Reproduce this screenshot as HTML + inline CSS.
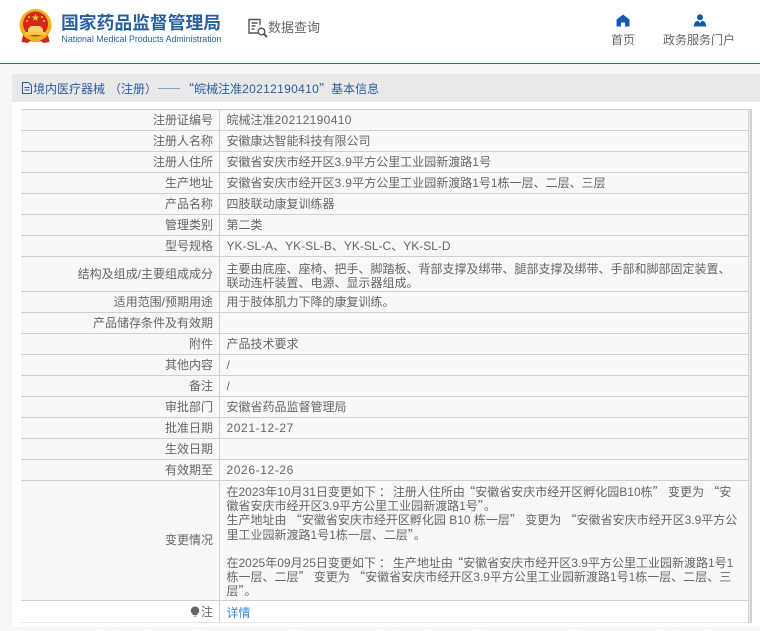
<!DOCTYPE html>
<html lang="zh-CN">
<head>
<meta charset="utf-8">
<title>国家药品监督管理局</title>
<style>
html,body{margin:0;padding:0;background:#fff;}
body{width:760px;height:631px;position:relative;overflow:hidden;font-family:"Liberation Sans","Noto Sans CJK SC",sans-serif;color:#666;font-size:12px;}
.a{position:absolute;white-space:nowrap;}
.q{font-family:"Noto Sans CJK SC",sans-serif;}
.c{margin-left:3px;margin-right:2px;}
.m{margin-left:-5px;}
.d{letter-spacing:.35px;}
.t{letter-spacing:.6px;}
#dots{position:absolute;left:0;top:64px;width:760px;height:567px;background:repeating-linear-gradient(45deg,#f2f2f2 0 1px,#fbfbfb 1px 2px);}
#panel{position:absolute;left:12px;top:74px;width:748px;height:553px;background:#fff;}
#hd{position:absolute;left:12px;top:74px;width:748px;height:28px;background:#e9e9e9;}
.r{position:absolute;left:21px;width:727px;border-top:1px solid #d0d0d0;box-sizing:border-box;background:#f8f8f9;}
.r .k{position:absolute;left:0;top:0;width:192px;text-align:right;line-height:21px;height:100%;background:#f7f7f7;white-space:nowrap;}
.r .s{position:absolute;left:198px;top:0;width:1px;height:100%;background:#d0d0d0;}
.r .v{position:absolute;left:205.500px;top:0;line-height:21px;white-space:nowrap;}
</style>
</head>
<body>
<svg class="a" style="left:18px;top:8px" width="36" height="38" viewBox="0 0 36 38">
<path d="M5 27l-1.500 7 6 1 3-2h10l3 2 6-1-1.500-7z" fill="#c8281e"/>
<circle cx="17.500" cy="17" r="16" fill="#efb21e"/>
<circle cx="17.500" cy="16" r="12.500" fill="#d8261c"/>
<path d="M17.500 6l1 2.600h2.700l-2.200 1.600.9 2.600-2.400-1.600-2.400 1.600.9-2.600-2.200-1.600h2.700z" fill="#f8d030"/>
<circle cx="11" cy="9" r="1" fill="#f8d030"/><circle cx="24" cy="9" r="1" fill="#f8d030"/><circle cx="9" cy="13" r="1" fill="#f8d030"/><circle cx="26" cy="13" r="1" fill="#f8d030"/>
<path d="M10 21l3-3h9l3 3v3H10z" fill="#f6d66a"/>
<rect x="7" y="24" width="21" height="3" fill="#f3c64a"/>
<rect x="13" y="31" width="9" height="3" fill="#efb21e"/>
</svg>
<div class="a" style="left:61px;top:10px;font-size:17.800px;line-height:24px;font-weight:700;color:#2a5f9e;font-family:'Noto Sans CJK SC',sans-serif;">国家药品监督管理局</div>
<div class="a" style="left:61.500px;top:33px;font-size:8.800px;line-height:13px;color:#2a5f9e;">National Medical Products Administration</div>

<svg class="a" style="left:247px;top:18px" width="22" height="21" viewBox="0 0 22 21" fill="none" stroke="#555" stroke-width="1.400">
<path d="M11 15H2V1.500h11V7"/><path d="M4.500 5h6M4.500 8h4M4.500 11h3"/><circle cx="14.500" cy="13.500" r="3.300"/><path d="M17 16l3 3" stroke-width="2"/>
</svg>
<div class="a" style="left:268px;top:17px;font-size:13px;line-height:20px;color:#666;font-family:'Noto Sans CJK SC',sans-serif;">数据查询</div>

<svg class="a" style="left:616px;top:14px" width="14" height="13" viewBox="0 0 14 13"><path d="M7 0.500L13.500 5.500V12.500H9V8.500H5V12.500H.5V5.500z" fill="#1558b0"/></svg>
<div class="a" style="left:611px;top:31px;font-size:12px;line-height:18px;">首页</div>
<svg class="a" style="left:693px;top:14px" width="14" height="13" viewBox="0 0 14 13"><circle cx="7" cy="3.200" r="3" fill="#1558b0"/><path d="M.5 12.500L2 8l3-1.500L7 9l2-2.500L12 8l1.500 4.500z" fill="#1558b0"/></svg>
<div class="a" style="left:663px;top:31px;font-size:12px;line-height:18px;">政务服务门户</div>

<div class="a" style="left:0;top:63px;width:760px;height:1px;background:#2e6fa3;"></div>
<div id="dots"></div>
<div id="panel"></div>
<div id="hd"></div>
<svg class="a" style="left:22px;top:82px" width="10" height="12" viewBox="0 0 10 12" fill="none" stroke="#2a5f9e"><path d="M.5.500h6l3 3v8h-9z"/><path d="M2.500 5.500h5M2.500 8h5"/></svg>
<div class="a" style="left:33px;top:80px;font-size:12px;line-height:17px;color:#2a5f9e;">境内医疗器械<span class="q" style="margin-left:4px">（</span>注册<span class="q">）</span><span class="q" style="letter-spacing:1px">——</span><span class="q">“</span>皖械注准<span class="d" style="letter-spacing:.33px">20212190410</span><span class="q">”</span>基本信息</div>

<div class="r" style="top:109px;height:21px"><div class="k">注册证编号</div><div class="s"></div><div class="v">皖械注准<span class="d">20212190410</span></div></div>
<div class="r" style="top:130px;height:21px"><div class="k">注册人名称</div><div class="s"></div><div class="v">安徽康达智能科技有限公司</div></div>
<div class="r" style="top:151px;height:21px"><div class="k">注册人住所</div><div class="s"></div><div class="v">安徽省安庆市经开区<span class="d">3.9</span>平方公里工业园新渡路<span class="d">1</span>号</div></div>
<div class="r" style="top:172px;height:21px"><div class="k">生产地址</div><div class="s"></div><div class="v">安徽省安庆市经开区<span class="d">3.9</span>平方公里工业园新渡路1号1栋一层、二层、三层</div></div>
<div class="r" style="top:193px;height:21px"><div class="k">产品名称</div><div class="s"></div><div class="v">四肢联动康复训练器</div></div>
<div class="r" style="top:214px;height:21px"><div class="k">管理类别</div><div class="s"></div><div class="v">第二类</div></div>
<div class="r" style="top:235px;height:21px"><div class="k">型号规格</div><div class="s"></div><div class="v">YK-SL-A、YK-SL-B、YK-SL-C、YK-SL-D</div></div>
<div class="r" style="top:256px;height:35px"><div class="k" style="line-height:35px">结构及组成/主要组成成分</div><div class="s"></div><div class="v" style="top:5px;line-height:14px">主要由底座、座椅、把手、脚踏板、背部支撑及绑带、腿部支撑及绑带、手部和脚部固定装置、<br>联动连杆装置、电源、显示器组成。</div></div>
<div class="r" style="top:291px;height:21px"><div class="k">适用范围/预期用途</div><div class="s"></div><div class="v">用于肢体肌力下降的康复训练。</div></div>
<div class="r" style="top:312px;height:21px"><div class="k">产品储存条件及有效期</div><div class="s"></div><div class="v"></div></div>
<div class="r" style="top:333px;height:21px"><div class="k">附件</div><div class="s"></div><div class="v">产品技术要求</div></div>
<div class="r" style="top:354px;height:21px"><div class="k">其他内容</div><div class="s"></div><div class="v">/</div></div>
<div class="r" style="top:375px;height:21px"><div class="k">备注</div><div class="s"></div><div class="v">/</div></div>
<div class="r" style="top:396px;height:21px"><div class="k">审批部门</div><div class="s"></div><div class="v">安徽省药品监督管理局</div></div>
<div class="r" style="top:417px;height:21px"><div class="k">批准日期</div><div class="s"></div><div class="v t">2021-12-27</div></div>
<div class="r" style="top:438px;height:21px"><div class="k">生效日期</div><div class="s"></div><div class="v"></div></div>
<div class="r" style="top:459px;height:21px"><div class="k">有效期至</div><div class="s"></div><div class="v t">2026-12-26</div></div>
<div class="r" style="top:480px;height:120px"><div class="k" style="line-height:119px">变更情况</div><div class="s"></div><div class="v" style="top:4px;line-height:14.200px">在2023年10月31日变更如下<span class="q c">：</span>注册人住所由 <span class="q m">“</span>安徽省安庆市经开区孵化园B10栋<span class="q">”</span> 变更为 <span class="q">“</span>安<br>徽省安庆市经开区3.9平方公里工业园新渡路1号<span class="q">”</span>。<br>生产地址由 <span class="q">“</span>安徽省安庆市经开区孵化园 B10 栋一层<span class="q">”</span> 变更为 <span class="q">“</span>安徽省安庆市经开区3.9平方公<br>里工业园新渡路1号1栋一层、二层<span class="q">”</span>。<br><br>在2025年09月25日变更如下<span class="q c">：</span>生产地址由 <span class="q m">“</span>安徽省安庆市经开区3.9平方公里工业园新渡路1号1<br>栋一层、二层<span class="q">”</span> 变更为 <span class="q">“</span>安徽省安庆市经开区3.9平方公里工业园新渡路1号1栋一层、二层、三<br>层<span class="q">”</span>。</div></div>
<div class="r" style="top:600px;height:23px;background:#fff;border-bottom:1px solid #e8e8e8"><div class="k" style="background:#fff;line-height:23px"><svg width="10" height="11" viewBox="0 0 10 11" style="vertical-align:-1px;margin-right:1px"><path d="M5 .5a4.200 4.200 0 0 1 4.200 4.200c0 1.800-1.400 2.600-2.200 4.300H3C2.200 7.300.8 6.500.8 4.700A4.200 4.200 0 0 1 5 .5z" fill="#666"/><rect x="3.500" y="9.500" width="3" height="1.300" fill="#aaa"/></svg>注</div><div class="s"></div><div class="v" style="line-height:24px;color:#3a87d8">详情</div></div>
<div class="a" style="left:748px;top:109px;width:1px;height:514px;background:#d0d0d0;border-right:1px solid #eee;box-shadow:2px 0 0 #d0d0d0;"></div>
</body>
</html>
